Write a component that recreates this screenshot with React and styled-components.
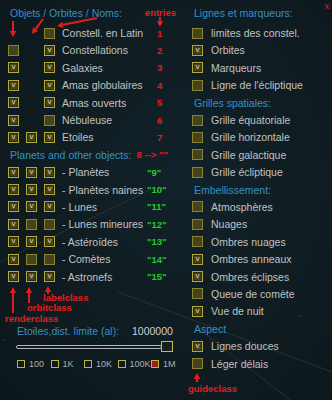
import React from "react";
import styled, { createGlobalStyle } from "styled-components";

const ROW = 17.4;

const GlobalStyle = createGlobalStyle`
  html, body {
    margin: 0;
    padding: 0;
    background: #0e1a1f;
  }
  body {
    font-family: "Liberation Sans", Arial, sans-serif;
  }
`;

const objects = [
  { boxes: [null, null, false], label: "Constell. en Latin", note: "1" },
  { boxes: [false, null, true], label: "Constellations", note: "2" },
  { boxes: [true, null, true], label: "Galaxies", note: "3" },
  { boxes: [true, null, true], label: "Amas globulaires", note: "4" },
  { boxes: [true, null, true], label: "Amas ouverts", note: "5" },
  { boxes: [true, null, false], label: "Nébuleuse", note: "6" },
  { boxes: [true, true, true], label: "Etoiles", note: "7" },
];

const planets = [
  { boxes: [true, true, true], label: "- Planètes", note: '"9"' },
  { boxes: [true, true, true], label: "- Planètes naines", note: '"10"' },
  { boxes: [true, true, true], label: "- Lunes", note: '"11"' },
  { boxes: [true, false, false], label: "- Lunes mineures", note: '"12"' },
  { boxes: [true, true, true], label: "- Astéroïdes", note: '"13"' },
  { boxes: [true, false, false], label: "- Comètes", note: '"14"' },
  { boxes: [true, true, true], label: "- Astronefs", note: '"15"' },
];

const rightGroups = [
  {
    title: "Lignes et marqueurs:",
    items: [
      ["limites des constel.", false],
      ["Orbites", true],
      ["Marqueurs", true],
      ["Ligne de l'écliptique", false],
    ],
  },
  {
    title: "Grilles spatiales:",
    items: [
      ["Grille équatoriale", false],
      ["Grille horizontale", false],
      ["Grille galactique", false],
      ["Grille écliptique", false],
    ],
  },
  {
    title: "Embellissement:",
    items: [
      ["Atmosphères", false],
      ["Nuages", false],
      ["Ombres nuages", false],
      ["Ombres anneaux", true],
      ["Ombres éclipses", true],
      ["Queue de comète", false],
      ["Vue de nuit", true],
    ],
  },
  {
    title: "Aspect",
    items: [
      ["Lignes douces", true],
      ["Léger délais", false],
    ],
  },
];

const limits = [
  ["100", false],
  ["1K", false],
  ["10K", false],
  ["100K", false],
  ["1M", true],
];

const arrows = [
  [13, 21, 13, 37],
  [43, 19, 32, 34],
  [97, 18, 57, 26],
  [160, 17, 160, 27],
  [13, 313, 13, 287],
  [29, 303, 29, 287],
  [48, 294, 48, 286],
  [197, 382, 197, 373],
];

const Arrow = ({ x1, y1, x2, y2 }) => {
  const a = Math.atan2(y2 - y1, x2 - x1);
  const len = 6;
  const w = 3.2;
  const bx = x2 - Math.cos(a) * len;
  const by = y2 - Math.sin(a) * len;
  const px = -Math.sin(a) * w;
  const py = Math.cos(a) * w;
  return (
    <g>
      <line x1={x1} y1={y1} x2={bx} y2={by} stroke="#e41c1c" strokeWidth="2" />
      <polygon
        points={`${x2},${y2} ${bx + px},${by + py} ${bx - px},${by - py}`}
        fill="#e41c1c"
      />
    </g>
  );
};

const App = () => {
  return (
    <>
      <GlobalStyle />
      <Panel>
        <Sky viewBox="0 0 332 400" aria-hidden="true">
          <line x1="0" y1="262" x2="150" y2="190" />
          <line x1="118" y1="292" x2="332" y2="372" />
          <line x1="200" y1="330" x2="290" y2="400" />
          <circle cx="262" cy="140" r="0.8" />
          <circle cx="300" cy="316" r="0.8" />
          <circle cx="4" cy="340" r="0.8" />
        </Sky>

        <Column>
          <Header>
            <span>Objets / Orbites / Noms:</span>
            <Note $tone="red">entries</Note>
          </Header>
          <Rows>
            {objects.map((row) => (
              <ObjectRow key={row.label} row={row} tone="red" />
            ))}
          </Rows>
          <Header>
            <span>Planets and other objects:</span>
            <Note $tone="red" $gap={8}>
              8 --&gt; ""
            </Note>
          </Header>
          {planets.map((row) => (
            <ObjectRow key={row.label} row={row} tone="green" />
          ))}
          <ClassNotes>
            <ClassName $indent={35}>labelclass</ClassName>
            <ClassName $indent={19}>orbitclass</ClassName>
            <ClassName $indent={-3}>renderclass</ClassName>
          </ClassNotes>
          <LimitRow>
            <LimitLabel>Etoiles,dist. limite (al):</LimitLabel>
            <LimitValue>1000000</LimitValue>
          </LimitRow>
          <Slider>
            <Track />
            <Thumb />
          </Slider>
          <Presets>
            {limits.map(([label, on]) => (
              <Preset key={label}>
                <Box $size="sm" $checked={on} />
                <span>{label}</span>
              </Preset>
            ))}
          </Presets>
        </Column>

        <Column>
          {rightGroups.map((group, gi) => (
            <React.Fragment key={group.title}>
              <Header>{group.title}</Header>
              {group.items.map(([label, on], i) => (
                <OptionRow key={label} $lead={gi === 0 && i === 0}>
                  <Box $checked={on}>{on ? "v" : null}</Box>
                  <Label>{label}</Label>
                </OptionRow>
              ))}
            </React.Fragment>
          ))}
          <ClassNotes $right>
            <ClassName $indent={-4}>guideclass</ClassName>
          </ClassNotes>
        </Column>

        <Marks viewBox="0 0 332 400" aria-hidden="true">
          {arrows.map(([x1, y1, x2, y2], i) => (
            <Arrow key={i} x1={x1} y1={y1} x2={x2} y2={y2} />
          ))}
        </Marks>
        <CloseMark>x</CloseMark>
      </Panel>
    </>
  );
};

const ObjectRow = ({ row, tone }) => (
  <GridRow>
    {row.boxes.map((b, i) =>
      b === null ? (
        <span key={i} />
      ) : (
        <Box key={i} $checked={b}>
          {b ? "v" : null}
        </Box>
      )
    )}
    <Label>{row.label}</Label>
    <Note $tone={tone} $pad={tone === "red" ? 10 : 0}>
      {row.note}
    </Note>
  </GridRow>
);

export default App;

const Panel = styled.div`
  position: relative;
  width: 332px;
  height: 400px;
  box-sizing: border-box;
  overflow: hidden;
  padding: 4px 0 0 8px;
  display: grid;
  grid-template-columns: 168px 1fr;
  column-gap: 16px;
  align-items: start;
  background: radial-gradient(
    ellipse at 55% 45%,
    #12222a 0%,
    #0f1c21 55%,
    #0c171b 100%
  );
  color: #c2c2c2;
  font-size: 10.5px;
`;

const Sky = styled.svg`
  position: absolute;
  inset: 0;
  width: 332px;
  height: 400px;
  pointer-events: none;
  line {
    stroke: #2a3a40;
    stroke-width: 0.8;
  }
  circle {
    fill: #3a4a52;
  }
`;

const Marks = styled.svg`
  position: absolute;
  inset: 0;
  width: 332px;
  height: 400px;
  pointer-events: none;
`;

const CloseMark = styled.span`
  position: absolute;
  top: 0;
  right: 3px;
  color: #d82020;
  font-size: 9px;
  line-height: 12px;
`;

const Column = styled.div`
  position: relative;
  display: flex;
  flex-direction: column;
`;

const Rows = styled.div`
  display: flex;
  flex-direction: column;
  margin-top: 3px;
`;

const Header = styled.div`
  height: ${ROW}px;
  display: flex;
  align-items: center;
  justify-content: space-between;
  padding-left: 2px;
  color: #3890c2;
  white-space: nowrap;
`;

const Note = styled.span`
  font-size: 9.5px;
  font-weight: bold;
  white-space: nowrap;
  padding-left: ${(p) => p.$pad || 0}px;
  margin-right: ${(p) => p.$gap || 0}px;
  color: ${(p) => (p.$tone === "green" ? "#22cc2a" : "#e21e1e")};
`;

const GridRow = styled.div`
  height: ${ROW}px;
  display: grid;
  grid-template-columns: 18px 18px 18px 85px 1fr;
  align-items: center;
`;

const OptionRow = styled.div`
  height: ${ROW}px;
  display: grid;
  grid-template-columns: 19px 1fr;
  align-items: center;
  margin-top: ${(p) => (p.$lead ? 3 : 0)}px;
`;

const Label = styled.span`
  white-space: nowrap;
  color: #c2c2c2;
`;

const Box = styled.span`
  box-sizing: border-box;
  width: ${(p) => (p.$size === "sm" ? 8 : 11)}px;
  height: ${(p) => (p.$size === "sm" ? 8 : 11)}px;
  display: inline-flex;
  align-items: center;
  justify-content: center;
  font-size: 8px;
  line-height: 1;
  padding-bottom: 1px;
  color: #e2dea6;
  border: 1px solid
    ${(p) =>
      p.$size === "sm" ? "#bdb542" : p.$checked ? "#b3ab40" : "#8a8432"};
  background: ${(p) =>
    p.$size === "sm"
      ? p.$checked
        ? "#9c2020"
        : "transparent"
      : "#46441e"};
  box-shadow: ${(p) =>
    p.$checked && p.$size !== "sm" ? "inset 0 0 0 1px #2c2b12" : "none"};
`;

const ClassNotes = styled.div`
  height: ${(p) => (p.$right ? 28 : 37)}px;
  padding-top: ${(p) => (p.$right ? 12 : 7.3)}px;
  box-sizing: border-box;
  display: flex;
  flex-direction: column;
`;

const ClassName = styled.span`
  margin-left: ${(p) => p.$indent}px;
  color: #e21e1e;
  font-size: 9.5px;
  font-weight: bold;
  line-height: 10.7px;
  white-space: nowrap;
`;

const LimitRow = styled.div`
  height: ${ROW}px;
  display: grid;
  grid-template-columns: 115px auto;
  align-items: center;
  padding-left: 9px;
  white-space: nowrap;
`;

const LimitLabel = styled.span`
  color: #3890c2;
`;

const LimitValue = styled.span`
  color: #d0d0d0;
`;

const Slider = styled.div`
  height: 14px;
  display: flex;
  align-items: center;
  padding-left: 8px;
`;

const Track = styled.div`
  box-sizing: border-box;
  width: 146px;
  height: 4px;
  border: 1px solid #b4b4b4;
  border-radius: 2px;
`;

const Thumb = styled.div`
  box-sizing: border-box;
  width: 12px;
  height: 11px;
  margin-left: -1px;
  border: 1px solid #c4bc44;
  background: #15211f;
`;

const Presets = styled.div`
  height: 20.6px;
  display: grid;
  grid-template-columns: repeat(5, 33.5px);
  align-items: center;
  padding-left: 9px;
`;

const Preset = styled.div`
  display: flex;
  align-items: center;
  gap: 4px;
  font-size: 9px;
  color: #b0b0b0;
  white-space: nowrap;
`;
